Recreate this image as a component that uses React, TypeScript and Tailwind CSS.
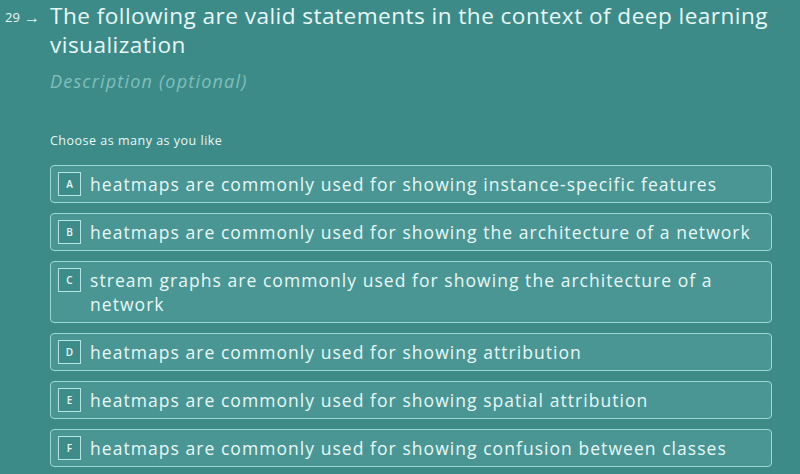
import React from "react";

const options = [
  { k: "A", t: "heatmaps are commonly used for showing instance-specific features" },
  { k: "B", t: "heatmaps are commonly used for showing the architecture of a network" },
  { k: "C", t: "stream graphs are commonly used for showing the architecture of a network" },
  { k: "D", t: "heatmaps are commonly used for showing attribution" },
  { k: "E", t: "heatmaps are commonly used for showing spatial attribution" },
  { k: "F", t: "heatmaps are commonly used for showing confusion between classes" },
];

export default function App() {
  return (
    <div
      className="w-[800px] h-[474px] overflow-hidden bg-[#3c8b88] text-[#e8f8f6]"
      style={{ fontFamily: '"Open Sans", "Noto Sans", sans-serif' }}
    >
      <div className="flex">
        <div className="w-[50px] shrink-0 pl-[5px] flex items-center h-[20px] mt-[7px] gap-[4px]">
          <span className="text-[13px] leading-[20px]">29</span>
          <span className="text-[16px] leading-[20px]">→</span>
        </div>
        <div className="flex-1">
          <div className="text-[22.6px] leading-[29px] font-medium tracking-[0.45px] pt-[1px]">
            The following are valid statements in the context of deep learning visualization
          </div>
          <div className="mt-[9px] text-[18px] italic text-[#80bfbd] leading-[26px] tracking-[1.2px]">
            Description (optional)
          </div>
          <div className="mt-[38px] text-[12.5px] leading-[18px] tracking-[0.5px]">Choose as many as you like</div>
          <div className="mt-[15px] flex flex-col gap-[10px] w-[722px]">
            {options.map((o) => (
              <div
                key={o.k}
                className="flex items-start gap-[9px] rounded-[4px] border border-[#9ad6d4] bg-[#4a9694] pl-[7px] pr-[3px] py-[6px]"
              >
                <div className="w-[23px] h-[24px] shrink-0 border border-[#b6e6e4] bg-[#3e8c89] flex items-center justify-center text-[10px] font-semibold">
                  {o.k}
                </div>
                <div className="flex-1 text-[17.5px] leading-[24px] font-medium tracking-[1.05px]">{o.t}</div>
              </div>
            ))}
          </div>
        </div>
      </div>
    </div>
  );
}
